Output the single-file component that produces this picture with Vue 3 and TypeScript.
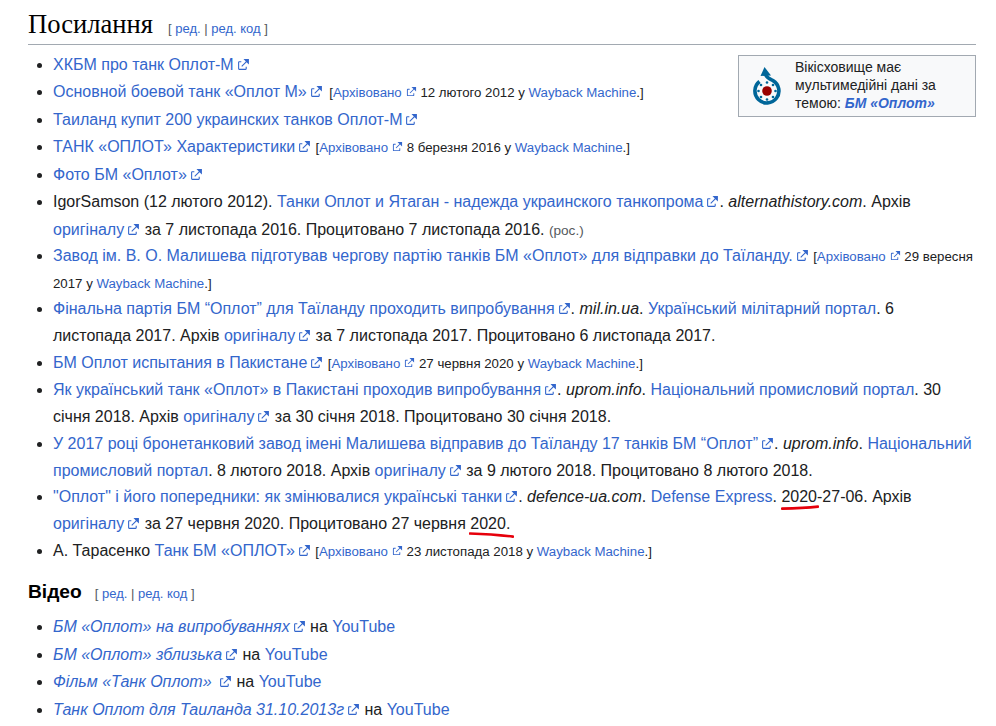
<script setup lang="ts">
const extPath = "M6 1h5v5L8.86 3.85 4.7 8 4 7.3l4.15-4.15zM2 3h2v1H2v6h6V8h1v2a1 1 0 0 1-1 1H2a1 1 0 0 1-1-1V4a1 1 0 0 1 1-1";
</script>

<template>
  <div class="page">
    <svg class="defs" width="0" height="0" aria-hidden="true">
      <symbol id="ext" viewBox="0 0 12 12"><path fill="#3366cc" :d="extPath" /></symbol>
    </svg>

    <h2 class="h2">Посилання<span class="edit">[ <a>ред.</a> | <a>ред. код</a> ]</span></h2>

    <aside class="commons">
      <svg class="commons-logo" viewBox="0 0 32 40" width="32" height="40" aria-hidden="true">
        <circle cx="16" cy="24" r="4.8" fill="#990000" />
        <g fill="#006699">
          <circle cx="16" cy="15.5" r="1.3" /><circle cx="10" cy="18" r="1.3" /><circle cx="7.5" cy="24" r="1.3" />
          <circle cx="10" cy="30" r="1.3" /><circle cx="16" cy="32.5" r="1.3" /><circle cx="22" cy="30" r="1.3" />
          <circle cx="24.5" cy="24" r="1.3" /><circle cx="22" cy="18" r="1.3" />
        </g>
        <path d="M8.5 14.5A12 12 0 1 0 22 13.6C18.5 12 15.5 11 14.5 7" fill="none" stroke="#006699" stroke-width="3.6" />
        <path d="M13.5 0L20 8.5 9.5 9z" fill="#006699" />
      </svg>
      <div>Вікісховище має мультимедійні дані за темою: <a class="strong"><b><i>БМ «Оплот»</i></b></a></div>
    </aside>

    <ul class="list refs">
      <li><a>ХКБМ про танк Оплот-М<svg class="x"><use href="#ext" /></svg></a></li>
      <li><a>Основной боевой танк «Оплот М»<svg class="x sp"><use href="#ext" /></svg></a> <small>[<a>Архівовано<svg class="x s"><use href="#ext" /></svg></a> 12 лютого 2012 у <a>Wayback Machine</a>.]</small></li>
      <li><a>Таиланд купит 200 украинских танков Оплот-М<svg class="x"><use href="#ext" /></svg></a></li>
      <li><a>ТАНК «ОПЛОТ» Характеристики<svg class="x"><use href="#ext" /></svg></a> <small>[<a>Архівовано<svg class="x s"><use href="#ext" /></svg></a> 8 березня 2016 у <a>Wayback Machine</a>.]</small></li>
      <li><a>Фото БМ «Оплот»<svg class="x"><use href="#ext" /></svg></a></li>
      <li>IgorSamson (12 лютого 2012). <a>Танки Оплот и Ятаган - надежда украинского танкопрома<svg class="x"><use href="#ext" /></svg></a>. <i>alternathistory.com</i>. Архів <a>оригіналу<svg class="x"><use href="#ext" /></svg></a> за 7 листопада 2016. Процитовано 7 листопада 2016. <span class="lang">(рос.)</span></li>
      <li><a>Завод ім. В. О. Малишева підготував чергову партію танків БМ «Оплот» для відправки до Таїланду.<svg class="x"><use href="#ext" /></svg></a> <small>[<a>Архівовано<svg class="x s"><use href="#ext" /></svg></a> 29 вересня 2017 у <a>Wayback Machine</a>.]</small></li>
      <li><a>Фінальна партія БМ “Оплот” для Таїланду проходить випробування<svg class="x"><use href="#ext" /></svg></a>. <i>mil.in.ua</i>. <a>Український мілітарний портал</a>. 6 листопада 2017. Архів <a>оригіналу<svg class="x"><use href="#ext" /></svg></a> за 7 листопада 2017. Процитовано 6 листопада 2017.</li>
      <li><a>БМ Оплот испытания в Пакистане<svg class="x"><use href="#ext" /></svg></a> <small>[<a>Архівовано<svg class="x s"><use href="#ext" /></svg></a> 27 червня 2020 у <a>Wayback Machine</a>.]</small></li>
      <li><a>Як український танк «Оплот» в Пакистані проходив випробування<svg class="x"><use href="#ext" /></svg></a>. <i>uprom.info</i>. <a>Національний промисловий портал</a>. 30 січня 2018. Архів <a>оригіналу<svg class="x"><use href="#ext" /></svg></a> за 30 січня 2018. Процитовано 30 січня 2018.</li>
      <li><a>У 2017 році бронетанковий завод імені Малишева відправив до Таїланду 17 танків БМ “Оплот”<svg class="x"><use href="#ext" /></svg></a>. <i>uprom.info</i>. <a>Національний промисловий портал</a>. 8 лютого 2018. Архів <a>оригіналу<svg class="x"><use href="#ext" /></svg></a> за 9 лютого 2018. Процитовано 8 лютого 2018.</li>
      <li><a>"Оплот" і його попередники: як змінювалися українські танки<svg class="x"><use href="#ext" /></svg></a>. <i>defence-ua.com</i>. <a>Defense Express</a>. <span class="mark">2020<svg class="red r1" viewBox="0 0 38 5" width="38" height="5" aria-hidden="true"><path d="M1 3.6C12 3.4 25 3 37 1.6" /></svg></span>-27-06. Архів <a>оригіналу<svg class="x"><use href="#ext" /></svg></a> за 27 червня 2020. Процитовано 27 червня <span class="mark">2020<svg class="red r2" viewBox="0 0 45 6" width="45" height="6" aria-hidden="true"><path d="M1 1.5C14 2 30 3 44 4.6" /></svg></span>.</li>
      <li>А. Тарасенко <a>Танк БМ «ОПЛОТ»<svg class="x"><use href="#ext" /></svg></a> <small>[<a>Архівовано<svg class="x s"><use href="#ext" /></svg></a> 23 листопада 2018 у <a>Wayback Machine</a>.]</small></li>
    </ul>

    <h3 class="h3">Відео<span class="edit">[ <a>ред.</a> | <a>ред. код</a> ]</span></h3>
    <ul class="list videos">
      <li><a><i>БМ «Оплот» на випробуваннях</i><svg class="x"><use href="#ext" /></svg></a> на <a>YouTube</a></li>
      <li><a><i>БМ «Оплот» зблизька</i><svg class="x"><use href="#ext" /></svg></a> на <a>YouTube</a></li>
      <li><a><i>Фільм «Танк Оплот» </i><svg class="x"><use href="#ext" /></svg></a> на <a>YouTube</a></li>
      <li><a><i>Танк Оплот для Таиланда 31.10.2013г</i><svg class="x"><use href="#ext" /></svg></a> на <a>YouTube</a></li>
    </ul>
  </div>
</template>

<style>
html, body { margin: 0; background: #fff; }
</style>

<style scoped>
.page {
  box-sizing: border-box;
  width: 996px;
  height: 726px;
  overflow: hidden;
  padding: 9px 20px 0 28px;
  font-family: "Liberation Sans", Arial, sans-serif;
  font-size: 16px;
  line-height: 26.85px;
  color: #202122;
}
.defs { position: absolute; }
a { color: #3366cc; }
.h2 {
  margin: 0 0 6px;
  padding-bottom: 5px;
  border-bottom: 1px solid #a2a9b1;
  font-family: "Liberation Serif", "Times New Roman", serif;
  font-size: 26.6px;
  font-weight: 400;
  line-height: 30px;
  color: #000;
}
.h2 .edit { margin-left: 15px; }
.h3 {
  margin: 12px 0 6px;
  font-size: 19.2px;
  font-weight: 700;
  line-height: 30px;
  color: #000;
}
.edit {
  margin-left: 13px;
  font-family: "Liberation Sans", Arial, sans-serif;
  font-size: 13px;
  font-weight: 400;
  line-height: 1;
  color: #54595d;
}
.commons {
  float: right;
  box-sizing: border-box;
  width: 238px;
  height: 62px;
  margin: 4px 0 0 16px;
  padding: 0 8px 2px 12px;
  display: flex;
  gap: 12px;
  align-items: center;
  background: #f8f9fa;
  border: 1px solid #a2a9b1;
  font-size: 14px;
  line-height: 18px;
}
.commons-logo { flex: none; width: 32px; height: 40px; margin-top: 4px; }
.strong { color: #3366cc; }
.list {
  margin: 0;
  padding: 0 0 0 25px;
  list-style: disc;
}
.refs li:nth-child(-n+6) { line-height: 27.43px; }
.refs li:nth-child(7) { line-height: 26.7px; }
.videos { line-height: 27.6px; }
.x {
  display: inline-block;
  width: 13px;
  height: 13px;
  margin-left: 3px;
  vertical-align: -1px;
}
.x.sp { margin-right: 2px; margin-left: 3px; }
.x.s { width: 11px; height: 11px; margin-left: 4px; vertical-align: 0; }
small { font-size: 13.25px; line-height: 1; }
.lang { font-size: 13.6px; line-height: 1; color: #54595d; }
.mark { position: relative; display: inline-block; line-height: 18px; }
.red { position: absolute; fill: none; pointer-events: none; }
.red path { fill: none; stroke: #e6000b; stroke-width: 2.6; stroke-linecap: round; }
.r1 { left: 0; top: 17px; }
.r2 { left: -1px; top: 17px; }
</style>
